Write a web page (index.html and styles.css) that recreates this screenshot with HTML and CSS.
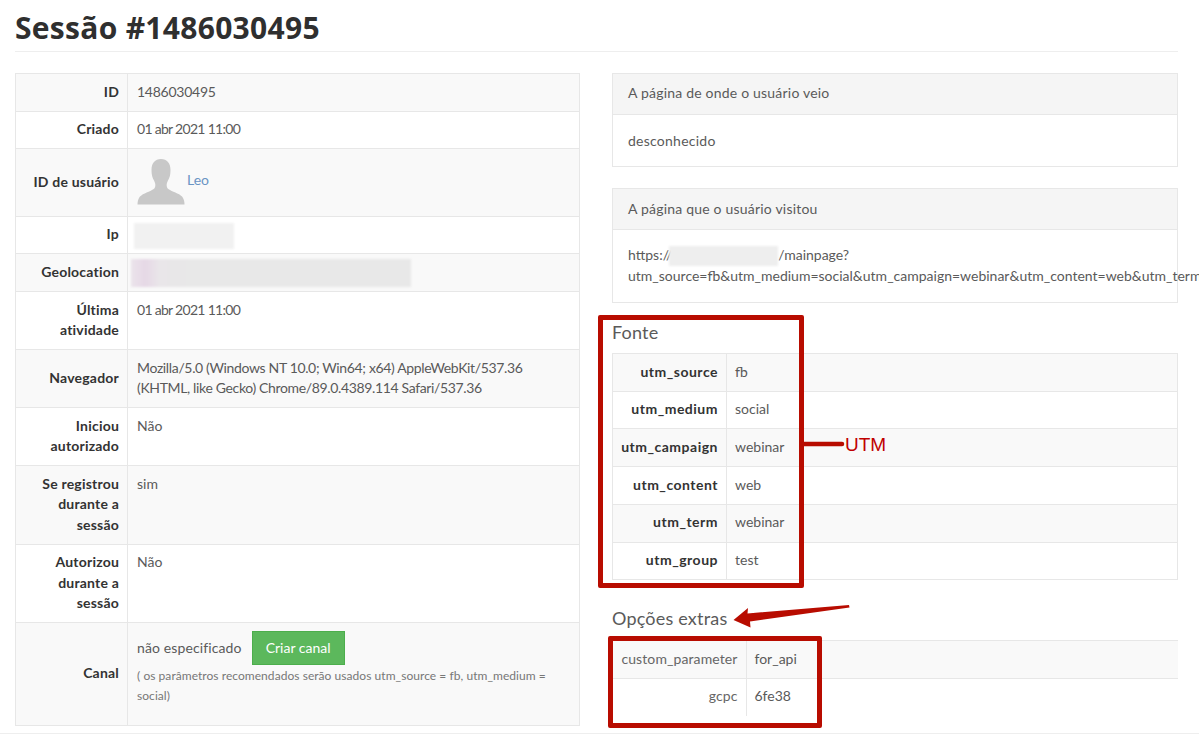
FILE: index.html
```html
<!DOCTYPE html>
<html lang="pt">
<head>
<meta charset="utf-8">
<title>Sessão #1486030495</title>
<link rel="stylesheet" href="styles.css">
</head>
<body>
<div class="page">
  <h1 class="title">Sessão #1486030495</h1>
  <div class="columns">
    <div class="col">
      <table class="info main">
        <tr><th>ID</th><td class="digits">1486030495</td></tr>
        <tr><th>Criado</th><td class="date">01 abr 2021 11:00</td></tr>
        <tr><th>ID de usuário</th><td>
          <div class="user">
            <svg class="avatar" width="50" height="50" viewBox="0 0 50 50"><path fill="#c8c8c8" d="M25 2c-6 0-9.500 4-9.500 11 0 5 1 8 2.500 10.500.8 1.500 1.500 3 1.300 5.500-.2 2-1.300 3-3.300 4C12 35.500 5 37 3 41c-1 2-1.500 4-1.500 6.500h47c0-2.500-.5-4.500-1.500-6.500-2-4-9-5.500-13-8-2-1-3.100-2-3.300-4-.2-2.500.5-4 1.300-5.500 1.500-2.500 2.500-5.500 2.500-10.500C34.500 6 31 2 25 2z"/></svg>
            <a class="link" href="#">Leo</a>
          </div></td></tr>
        <tr><th>Ip</th><td><div class="blur blur-ip"></div></td></tr>
        <tr><th>Geolocation</th><td><div class="blur blur-geo"></div></td></tr>
        <tr><th>Última atividade</th><td class="date">01 abr 2021 11:00</td></tr>
        <tr><th>Navegador</th><td class="agent">Mozilla/5.0 (Windows NT 10.0; Win64; x64) AppleWebKit/537.36 (KHTML, like Gecko) Chrome/89.0.4389.114 Safari/537.36</td></tr>
        <tr><th>Iniciou autorizado</th><td>Não</td></tr>
        <tr><th>Se registrou durante a sessão</th><td>sim</td></tr>
        <tr><th>Autorizou durante a sessão</th><td>Não</td></tr>
        <tr><th>Canal</th><td>
          <div class="channel"><span>não especificado</span><button class="btn" type="button">Criar canal</button></div>
          <p class="hint">( os parâmetros recomendados serão usados utm_source = fb, utm_medium = social)</p>
        </td></tr>
      </table>
    </div>
    <div class="col">
      <section class="card first">
        <div class="card-head">A página de onde o usuário veio</div>
        <div class="card-body">desconhecido</div>
      </section>
      <section class="card second">
        <div class="card-head">A página que o usuário visitou</div>
        <div class="card-body">https://<span class="blur-url"></span>/mainpage?<br>utm_source=fb&amp;utm_medium=social&amp;utm_campaign=webinar&amp;utm_content=web&amp;utm_term=webinar&amp;utm_group=test</div>
      </section>
      <h2 class="sub">Fonte</h2>
      <table class="info utm">
        <tr><th>utm_source</th><td>fb</td></tr>
        <tr><th>utm_medium</th><td>social</td></tr>
        <tr><th>utm_campaign</th><td>webinar</td></tr>
        <tr><th>utm_content</th><td>web</td></tr>
        <tr><th>utm_term</th><td>webinar</td></tr>
        <tr><th>utm_group</th><td>test</td></tr>
      </table>
      <h2 class="sub extra">Opções extras</h2>
      <table class="info opts">
        <tr><th>custom_parameter</th><td>for_api</td></tr>
        <tr><th>gcpc</th><td>6fe38</td></tr>
      </table>
    </div>
  </div>
  <div class="foot-line"></div>
  <div class="mark mark-utm"></div>
  <div class="mark mark-opts"></div>
  <div class="utm-label">UTM</div>
  <svg class="notes" width="1199" height="734" viewBox="0 0 1199 734">
    <path d="M804 444H842" stroke="#b80c00" stroke-width="4.500" stroke-linecap="round" fill="none"/>
    <path fill="#b80c00" d="M733.500 620L748 608 747.500 613.500 849 605 849.500 607.500 750 621.500 750.500 627.500z"/>
  </svg>
</div>
</body>
</html>
```
FILE: styles.css
```css
* { box-sizing: border-box; }
html, body { margin: 0; height: 734px; overflow: hidden; background: #fff; }
body { font-family: "Lato", "Liberation Sans", sans-serif; font-size: 14px; line-height: 20.4px; color: #5a5a5a; }
.page { position: relative; height: 734px; padding: 0 21px 0 15px; }
.title { margin: 0; height: 52px; padding-top: 9px; font-family: "Open Sans", sans-serif; font-size: 30px; line-height: 38px; font-weight: 700; letter-spacing: 0.3px; color: #2f2f2f; border-bottom: 1px solid #eee; }
.columns { display: flex; gap: 32px; padding-top: 21px; }
.col { width: 565px; min-width: 0; flex: none; }
.col + .col { width: 566px; }
.info { width: 100%; border-collapse: collapse; }
.info th, .info td { border: 1px solid #e7e7e7; padding: 7.500px 8px 8.800px; }
.info th { text-align: right; font-weight: 700; letter-spacing: 0.5px; color: #333; vertical-align: middle; }
.info td { vertical-align: top; padding-left: 8px; }
.info tr:nth-child(odd) { background: #f9f9f9; }
.main th { width: 112px; letter-spacing: 0.2px; }
.main td { padding-left: 9px; }
.date { letter-spacing: -0.7px; }
.digits { letter-spacing: -0.25px; }
.agent { letter-spacing: -0.35px; }
.user { display: flex; align-items: center; height: 50px; margin-left: -1px; }
.avatar { flex: none; }
.link { margin-left: 1px; margin-bottom: 3px; color: #6a94c4; text-decoration: none; }
.blur { filter: blur(1px); }
.blur-ip { width: 100px; height: 26px; margin: -1px 0 -4.600px -3px; background: #f1f1f1; }
.blur-geo { width: 280px; height: 28px; margin: -3px 0 -4.600px -6px; background: linear-gradient(90deg, #ebe4eb 0, #e6d8e6 14px, #e9e6e9 28px, #e8e8e8 60px); }
.channel { display: flex; align-items: center; gap: 10px; letter-spacing: 0.12px; }
.btn { height: 34px; width: 93px; padding: 0; background: #5cb85c; border: 1px solid #4cae4c; color: #fff; font: inherit; letter-spacing: 0; }
.hint { margin: 1px 0 0; padding: 0 0 9px; font-size: 12px; color: #777; letter-spacing: 0.05px; }
.card { border: 1px solid #e7e7e7; }
.first { height: 94px; }
.second { height: 115px; margin-top: 21px; }
.card-head { height: 41px; padding: 9px 15px; background: #f5f5f5; border-bottom: 1px solid #e7e7e7; letter-spacing: 0.2px; }
.second .card-head { padding-top: 10px; }
.card-body { padding: 15px; white-space: nowrap; }
.first .card-body { padding-top: 16px; letter-spacing: 0.25px; }
.second .card-body { padding-top: 15px; line-height: 20px; }
.blur-url { display: inline-block; width: 109px; height: 20px; margin-left: -3px; vertical-align: middle; background: #eee; filter: blur(1px); }
.sub { margin: 0; height: 50px; padding-top: 17px; font-size: 18px; line-height: 24px; font-weight: 400; letter-spacing: 0.2px; color: #5a5a5a; }
.extra { height: 60px; padding-top: 26px; }
.utm th { width: 114px; }
.utm td { padding-left: 8px; }
.opts th { width: 134px; font-weight: 400; letter-spacing: 0.1px; color: #666; }
.opts th, .opts td { border-left: 0; border-right: 0; border-bottom: 0; }
.opts th { border-right: 1px solid #e7e7e7; }
.foot-line { position: absolute; left: 0; right: 0; top: 733px; height: 1px; background: #eee; }
.mark { position: absolute; border: 5px solid #b80c00; border-radius: 2px; }
.mark-utm { left: 598px; top: 315px; width: 206px; height: 273px; }
.mark-opts { left: 608px; top: 636px; width: 214px; height: 92px; }
.utm-label { position: absolute; left: 845px; top: 433px; font-family: "Liberation Sans", sans-serif; font-size: 19px; line-height: 24px; color: #c00000; }
.notes { position: absolute; left: 0; top: 0; pointer-events: none; }
```
